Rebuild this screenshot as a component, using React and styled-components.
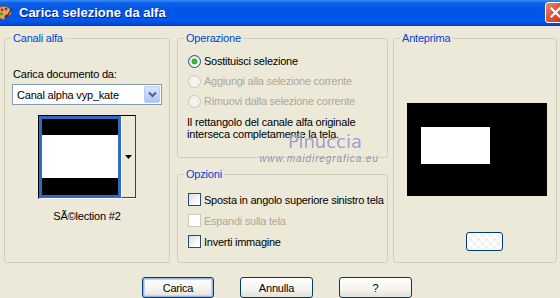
import styled, { createGlobalStyle } from 'styled-components';

const Global = createGlobalStyle`
    html, body {
        margin: 0;
        padding: 0;
        background: #ECE9D8;
    }
    body {
        font-family: "Liberation Sans", Arial, sans-serif;
        font-size: 11px;
        letter-spacing: -0.2px;
        color: #000;
    }
`;

export default function App() {
    return (
        <Window>
            <Global />
            <TitleBar>
                <TitleIcon />
                <TitleText>Carica selezione da alfa</TitleText>
                <CloseButton>
                    <svg width="11" height="11" viewBox="0 0 11 11">
                        <path d="M1.5 1.5 L9.5 9.5 M9.5 1.5 L1.5 9.5" stroke="#fff" strokeWidth="2.2" strokeLinecap="square" />
                    </svg>
                </CloseButton>
            </TitleBar>

            <Main>
                <Group $height={231}>
                    <Legend>Canali alfa</Legend>
                    <FieldLabel>Carica documento da:</FieldLabel>
                    <Select>
                        <SelectText>Canal alpha vyp_kate</SelectText>
                        <ComboArrow>
                            <svg width="9" height="7" viewBox="0 0 9 7">
                                <path d="M1 1.5 L4.5 5 L8 1.5" stroke="#4D6185" strokeWidth="2" fill="none" />
                            </svg>
                        </ComboArrow>
                    </Select>
                    <ThumbFrame>
                        <ImagePane>
                            <Band $black $h={16} />
                            <Band $h={43} />
                            <Band $black $h={17} />
                        </ImagePane>
                        <ThumbArrow>
                            <svg width="7" height="4" viewBox="0 0 7 4">
                                <path d="M0 0 H7 L3.5 4 Z" fill="#000" />
                            </svg>
                        </ThumbArrow>
                    </ThumbFrame>
                    <Caption>SÃ©lection #2</Caption>
                </Group>

                <MiddleColumn>
                    <Group $height={126}>
                        <Legend>Operazione</Legend>
                        <OptionList $top={6}>
                            <OptionRow $h={20}>
                                <Radio $checked />
                                <OptionText>Sostituisci selezione</OptionText>
                            </OptionRow>
                            <OptionRow $h={20} $disabled>
                                <Radio $disabled />
                                <OptionText>Aggiungi alla selezione corrente</OptionText>
                            </OptionRow>
                            <OptionRow $h={20} $disabled>
                                <Radio $disabled />
                                <OptionText>Rimuovi dalla selezione corrente</OptionText>
                            </OptionRow>
                        </OptionList>
                        <Note>
                            Il rettangolo del canale alfa originale<br />
                            interseca completamente la tela.
                        </Note>
                    </Group>

                    <Group $height={95}>
                        <Legend>Opzioni</Legend>
                        <OptionList $top={8}>
                            <OptionRow $h={21}>
                                <Check />
                                <OptionText>Sposta in angolo superiore sinistro tela</OptionText>
                            </OptionRow>
                            <OptionRow $h={21} $disabled>
                                <Check $disabled />
                                <OptionText>Espandi sulla tela</OptionText>
                            </OptionRow>
                            <OptionRow $h={21}>
                                <Check />
                                <OptionText>Inverti immagine</OptionText>
                            </OptionRow>
                        </OptionList>
                    </Group>
                </MiddleColumn>

                <Group $height={231}>
                    <Legend>Anteprima</Legend>
                    <Preview>
                        <PreviewSelection />
                    </Preview>
                    <ZoomButton />
                </Group>
            </Main>

            <ButtonRow>
                <PushButton $default>Carica</PushButton>
                <PushButton>Annulla</PushButton>
                <PushButton>?</PushButton>
            </ButtonRow>

            <Watermark>
                <WatermarkName>Pinuccia</WatermarkName>
                <WatermarkUrl>www.maidiregrafica.eu</WatermarkUrl>
            </Watermark>
        </Window>
    );
}

function TitleIcon() {
    return (
        <IconBox>
            <svg width="16" height="16" viewBox="0 0 16 16">
                <path d="M2 3 C5 0 13 1 14 6 C15 10 12 11 10 10 C8 9 7 12 8 13 C9 15 4 15 2 12 C0 9 0 5 2 3 Z" fill="#E8A45C" stroke="#8A4A1A" strokeWidth="0.8" />
                <circle cx="5" cy="5" r="1.4" fill="#D02020" />
                <circle cx="9" cy="4" r="1.4" fill="#2050D0" />
                <circle cx="4.5" cy="9" r="1.4" fill="#20A030" />
                <path d="M9 13 L15 3" stroke="#5A3010" strokeWidth="1.4" />
            </svg>
        </IconBox>
    );
}

const Window = styled.div`
    position: relative;
    width: 560px;
    height: 298px;
    overflow: hidden;
    background: #ECE9D8;
    display: flex;
    flex-direction: column;
`;

const TitleBar = styled.div`
    height: 25px;
    flex-shrink: 0;
    display: flex;
    align-items: center;
    overflow: hidden;
    background: linear-gradient(to bottom, #3C8CF5 0%, #0A5FEA 12%, #0055E6 45%, #0058EC 80%, #0348D2 100%);
    border-bottom: 1px solid #0040C0;
`;

const IconBox = styled.div`
    width: 16px;
    height: 16px;
    margin-left: -3px;
    display: flex;
`;

const TitleText = styled.span`
    margin-left: 6px;
    flex: 1;
    font-family: "Liberation Sans", Arial, sans-serif;
    font-size: 13px;
    font-weight: bold;
    letter-spacing: 0;
    color: #fff;
    text-shadow: 1px 1px #0A1A8A;
`;

const CloseButton = styled.div`
    width: 21px;
    height: 21px;
    box-sizing: border-box;
    margin-right: -6px;
    border: 1px solid #fff;
    border-radius: 3px;
    background: linear-gradient(135deg, #F08A6A 0%, #E2583A 40%, #C8381C 100%);
    display: flex;
    align-items: center;
    justify-content: center;
`;

const Main = styled.div`
    display: grid;
    grid-template-columns: 166px 213px 164px;
    column-gap: 5px;
    padding: 6px 0 0 4px;
    align-items: start;
`;

const MiddleColumn = styled.div`
    display: flex;
    flex-direction: column;
    gap: 10px;
    padding-left: 2px;
`;

const Group = styled.fieldset`
    margin: 0;
    padding: 0;
    min-width: 0;
    height: ${p => p.$height}px;
    box-sizing: border-box;
    border: 1px solid #D0D0BF;
    border-radius: 3px;
    display: flex;
    flex-direction: column;
`;

const Legend = styled.legend`
    margin-left: 6px;
    padding: 0 2px;
    font-size: 11px;
    line-height: 13px;
    color: #0046D5;
`;

const FieldLabel = styled.div`
    margin: 23px 0 0 8px;
    line-height: 13px;
`;

const Select = styled.div`
    margin: 3px 7px 0 7px;
    height: 21px;
    box-sizing: border-box;
    border: 1px solid #7F9DB9;
    background: #fff;
    display: flex;
    align-items: center;
    padding: 1px;
`;

const SelectText = styled.span`
    flex: 1;
    padding-left: 3px;
    font-size: 11px;
`;

const ComboArrow = styled.div`
    width: 16px;
    height: 17px;
    box-sizing: border-box;
    border: 1px solid #B9CDF8;
    border-radius: 2px;
    background: linear-gradient(to bottom, #DCE6FD 0%, #C3D4FB 50%, #AFC4F6 100%);
    display: flex;
    align-items: center;
    justify-content: center;
`;

const ThumbFrame = styled.div`
    margin: 10px auto 0;
    display: flex;
    border-top: 1px solid #000;
    border-left: 1px solid #000;
    border-bottom: 1px solid #fff;
`;

const ImagePane = styled.div`
    width: 82px;
    height: 82px;
    box-sizing: border-box;
    border: 3px solid #316AC5;
    display: flex;
    flex-direction: column;
`;

const Band = styled.div`
    height: ${p => p.$h}px;
    background: ${p => (p.$black ? '#000' : '#fff')};
`;

const ThumbArrow = styled.div`
    width: 15px;
    box-sizing: border-box;
    border-left: 1px solid #fff;
    border-right: 1px solid #404040;
    border-bottom: 1px solid #404040;
    background: #ECE9D8;
    display: flex;
    align-items: center;
    justify-content: center;
`;

const Caption = styled.div`
    margin-top: 11px;
    text-align: center;
    line-height: 13px;
    font-size: 11px;
`;

const OptionList = styled.div`
    margin: ${p => p.$top}px 0 0 10px;
    display: flex;
    flex-direction: column;
`;

const OptionRow = styled.div`
    height: ${p => p.$h}px;
    display: flex;
    align-items: center;
    gap: 3px;
    color: ${p => (p.$disabled ? '#ACA899' : '#000')};
`;

const OptionText = styled.span`
    font-size: 11px;
    letter-spacing: -0.25px;
    white-space: nowrap;
`;

const Radio = styled.span`
    flex-shrink: 0;
    width: 13px;
    height: 13px;
    box-sizing: border-box;
    border-radius: 50%;
    border: 1px solid ${p => (p.$disabled ? '#CAC8BB' : '#1C5180')};
    background: ${p => (p.$disabled
        ? '#F4F3EE'
        : p.$checked
            ? 'radial-gradient(circle, #55D24B 0, #21A121 2.5px, transparent 3.2px), linear-gradient(135deg, #DCDBD5, #fff)'
            : 'linear-gradient(135deg, #DCDBD5, #fff)')};
`;

const Check = styled.span`
    flex-shrink: 0;
    width: 13px;
    height: 13px;
    box-sizing: border-box;
    border: 1px solid ${p => (p.$disabled ? '#CAC8BB' : '#1C5180')};
    background: ${p => (p.$disabled ? '#fff' : 'linear-gradient(135deg, #DCDBD5 0%, #fff 80%)')};
`;

const Note = styled.div`
    margin: 5px 0 0 9px;
    line-height: 12px;
    font-size: 11px;
`;

const Preview = styled.div`
    margin: 58px 0 0 13px;
    width: 140px;
    height: 93px;
    box-sizing: border-box;
    background: #000;
    padding: 24px 0 0 14px;
`;

const PreviewSelection = styled.div`
    width: 69px;
    height: 37px;
    background: #fff;
`;

const ZoomButton = styled.div`
    margin: 36px 0 0 72px;
    width: 37px;
    height: 19px;
    box-sizing: border-box;
    border: 1px solid #003C74;
    border-radius: 3px;
    background:
        repeating-conic-gradient(#F0F0EC 0% 25%, #FFFFFF 0% 50%) 50% / 8px 8px;
`;

const ButtonRow = styled.div`
    display: flex;
    gap: 26px;
    padding: 14px 0 0 142px;
`;

const PushButton = styled.div`
    width: ${p => (p.$default ? 72 : 73)}px;
    height: 21px;
    box-sizing: border-box;
    border: 1px solid #003C74;
    border-radius: 3px;
    background: linear-gradient(to bottom, #FFFFFF 0%, #F4F3EE 60%, #E3E1D6 100%);
    box-shadow: ${p => (p.$default ? 'inset 0 0 0 1px #98B6EA, inset 0 0 0 2px #C5D6F3' : 'none')};
    display: flex;
    align-items: center;
    justify-content: center;
    font-size: 11px;
`;

const Watermark = styled.div`
    position: absolute;
    left: 258px;
    top: 131px;
    width: 122px;
    display: flex;
    flex-direction: column;
    align-items: center;
    pointer-events: none;
`;

const WatermarkName = styled.span`
    margin-left: 12px;
    font-family: "DejaVu Sans", sans-serif;
    font-size: 18px;
    line-height: 22px;
    letter-spacing: 0;
    color: #9D9BC3;
    text-shadow: 0 0 1px #fff;
`;

const WatermarkUrl = styled.span`
    font-family: "Liberation Sans", Arial, sans-serif;
    font-style: italic;
    font-size: 10px;
    letter-spacing: 0.9px;
    line-height: 12px;
    color: #8E8D98;
    text-shadow: 0 0 1px #fff;
`;
